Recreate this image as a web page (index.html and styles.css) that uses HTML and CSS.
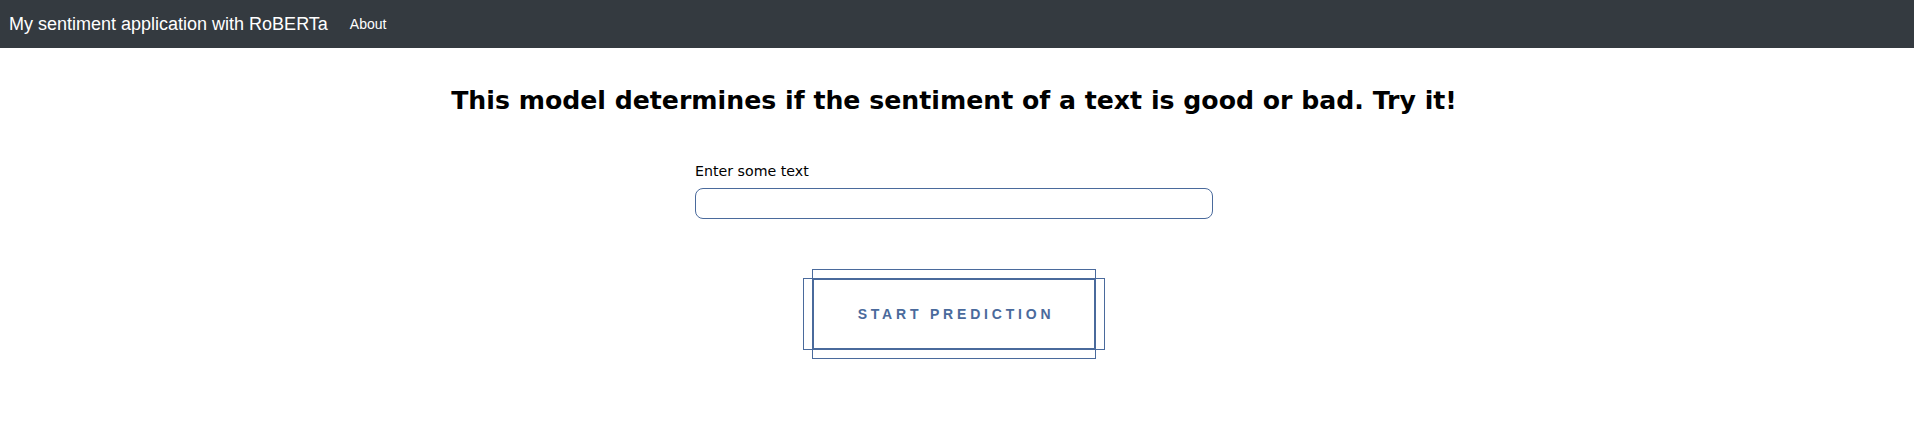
FILE: index.html
```html
<!DOCTYPE html>
<html>
<head>
<meta charset="utf-8">
<link rel="stylesheet" href="styles.css">
</head>
<body>
<nav class="navbar">
  <span class="brand">My sentiment application with RoBERTa</span>
  <span class="nav-link">About</span>
</nav>
<main class="content">
  <h1 class="title">This model determines if the sentiment of a text is good or bad. Try it!</h1>
  <div class="form">
    <label class="label">Enter some text</label>
    <div class="input"></div>
  </div>
  <div class="actions">
    <div class="btn-wrap">
      <span class="frame frame-tall"></span>
      <span class="frame frame-wide"></span>
      <button class="btn">START PREDICTION</button>
    </div>
  </div>
</main>
</body>
</html>
```
FILE: styles.css
```css
html, body {
  margin: 0;
  padding: 0;
  background: #fff;
  font-family: "DejaVu Sans", sans-serif;
}
body {
  min-height: 436px;
}
.navbar {
  height: 48px;
  background: #343a40;
  display: flex;
  align-items: center;
  padding: 0 9px;
  box-sizing: border-box;
}
.brand {
  font-family: "Liberation Sans", Arial, sans-serif;
  font-size: 18px;
  color: #fff;
  margin-right: 22px;
}
.nav-link {
  font-family: "Liberation Sans", Arial, sans-serif;
  font-size: 14px;
  color: #fff;
}
.content {
  display: flex;
  flex-direction: column;
  align-items: center;
  padding-left: 0;
  padding-right: 6px;
  padding-bottom: 60px;
}
.title {
  font-family: "DejaVu Sans", sans-serif;
  font-weight: bold;
  font-size: 25.2px;
  margin: 36px 0 0 0;
  color: #000;
  line-height: 34px;
}
.form {
  width: 518px;
  display: flex;
  flex-direction: column;
  margin-top: 44px;
}
.label {
  font-size: 14.2px;
  color: #000;
  line-height: 18px;
}
.input {
  margin-top: 8px;
  height: 31px;
  box-sizing: border-box;
  border: 1px solid #4a6a9c;
  border-radius: 8px;
}
.actions {
  margin-top: 50px;
  display: flex;
  justify-content: center;
}
.btn-wrap {
  position: relative;
  display: flex;
  padding: 9px;
}
.btn {
  width: 284px;
  height: 72px;
  background: transparent;
  border: 2px solid #4a6a9c;
  color: #4a6a9c;
  font-family: "Liberation Sans", Arial, sans-serif;
  font-weight: bold;
  font-size: 14px;
  letter-spacing: 3.8px;
  padding: 0 0 0 4px;
  cursor: pointer;
}
.frame {
  position: absolute;
  border: 1px solid #4a6a9c;
  pointer-events: none;
}
.frame-tall {
  left: 9px;
  right: 9px;
  top: 0;
  bottom: 0;
}
.frame-wide {
  left: 0;
  right: 0;
  top: 9px;
  bottom: 9px;
}
```
